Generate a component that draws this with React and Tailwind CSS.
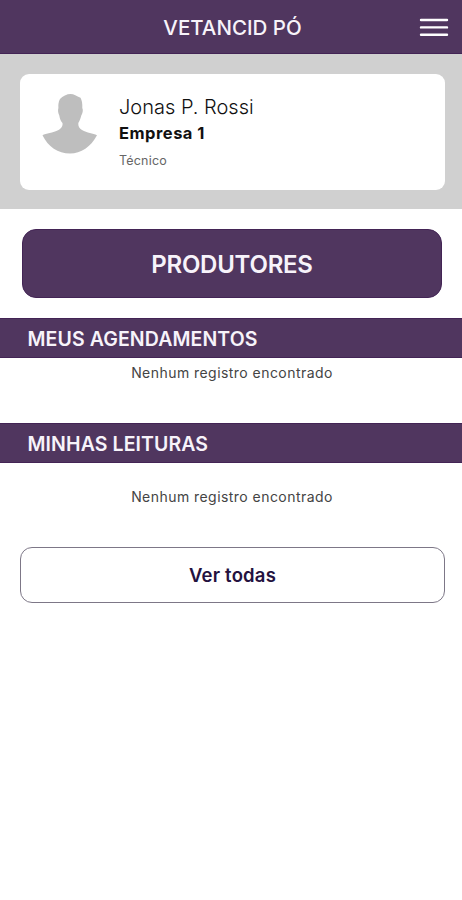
function MenuIcon() {
  return (
    <svg width="30" height="20" viewBox="0 0 30 20" stroke="#fff" strokeWidth="2.4" strokeLinecap="round">
      <path d="M2 3h26M2 10.400h26M2 17.700h26" />
    </svg>
  );
}

function Avatar() {
  return (
    <svg width="56" height="61" viewBox="0 0 56 61" fill="#bebebe">
      <path d="M28.500 0C32 0 34.500 2 38.500 3.800C40 6.500 40.500 10 40.300 14C41.500 16 40.500 19.500 39.300 21.500C38.500 24.500 37.500 27 36.300 29C36 32.500 37.500 34.500 40 36C45 39 51 39.500 55 41.200C49 52.500 39 59.500 28 59.500C16 59.500 6 52.500 .5 41.200C4 39.500 11 39 16.500 36C19 34.500 21 32.500 20.500 29C18.700 27 17.800 24.500 17.300 21.500C16 19 15.700 16 16.400 14C16.200 10 16.500 8 18 5C20.500 2 25 0 28.500 0Z" />
    </svg>
  );
}

function SectionTitle({ children }) {
  return (
    <h2 className="flex h-10 items-center border-y border-[#432455] bg-[#50365f] pt-[3px] pl-[27.500px] text-[19.5px] font-semibold tracking-[0.1px] text-[#f7f3fa]">
      {children}
    </h2>
  );
}

export default function App() {
  return (
    <div className="min-h-[900px] w-full bg-white font-['Inter',sans-serif]">
      <header className="grid h-[54px] grid-cols-[1fr_auto_1fr] items-center border-b border-[#432455] bg-[#50365f] text-[#f7f3fa]">
        <span />
        <h1 className="pt-[3px] pl-[3px] text-[20.5px] font-medium">VETANCID PÓ</h1>
        <button className="mr-[13px] justify-self-end" aria-label="Menu">
          <MenuIcon />
        </button>
      </header>

      <div className="h-[155px] bg-[#d0d0d0] px-5 pt-5">
        <div className="flex h-[116px] w-[425px] rounded-[9px] bg-white pt-5 pl-[22px]">
          <Avatar />
          <div className="ml-[21px] text-[#111]">
            <p className="pt-px text-[20px] leading-6 font-light">Jonas P. Rossi</p>
            <p className="mt-[2px] text-[16.5px] leading-6 font-bold tracking-[0.5px]">Empresa 1</p>
            <p className="mt-1 text-[12.5px] leading-6 tracking-[0.2px] text-[#666]">Técnico</p>
          </div>
        </div>
      </div>

      <div className="px-[22px] pt-5 pb-5">
        <button className="flex h-[69px] w-[420px] items-center justify-center rounded-[14px] border border-[#432455] bg-[#50365f] pt-[2px] text-[24px] font-semibold tracking-[-0.25px] text-[#f7f3fa]">
          PRODUTORES
        </button>
      </div>

      <SectionTitle>MEUS AGENDAMENTOS</SectionTitle>
      <p className="h-[65px] pt-[5px] pl-[2px] text-center text-[14px] leading-5 tracking-[0.45px] text-[#444]">
        Nenhum registro encontrado
      </p>

      <SectionTitle>MINHAS LEITURAS</SectionTitle>
      <p className="h-[84px] pt-6 pl-[2px] text-center text-[14px] leading-5 tracking-[0.45px] text-[#444]">
        Nenhum registro encontrado
      </p>

      <button className="mx-5 flex h-14 w-[425px] items-center justify-center rounded-xl border border-[#7d7787] pt-[2px] text-[18.5px] font-semibold tracking-[0.2px] text-[#24123f]">
        Ver todas
      </button>
    </div>
  );
}
